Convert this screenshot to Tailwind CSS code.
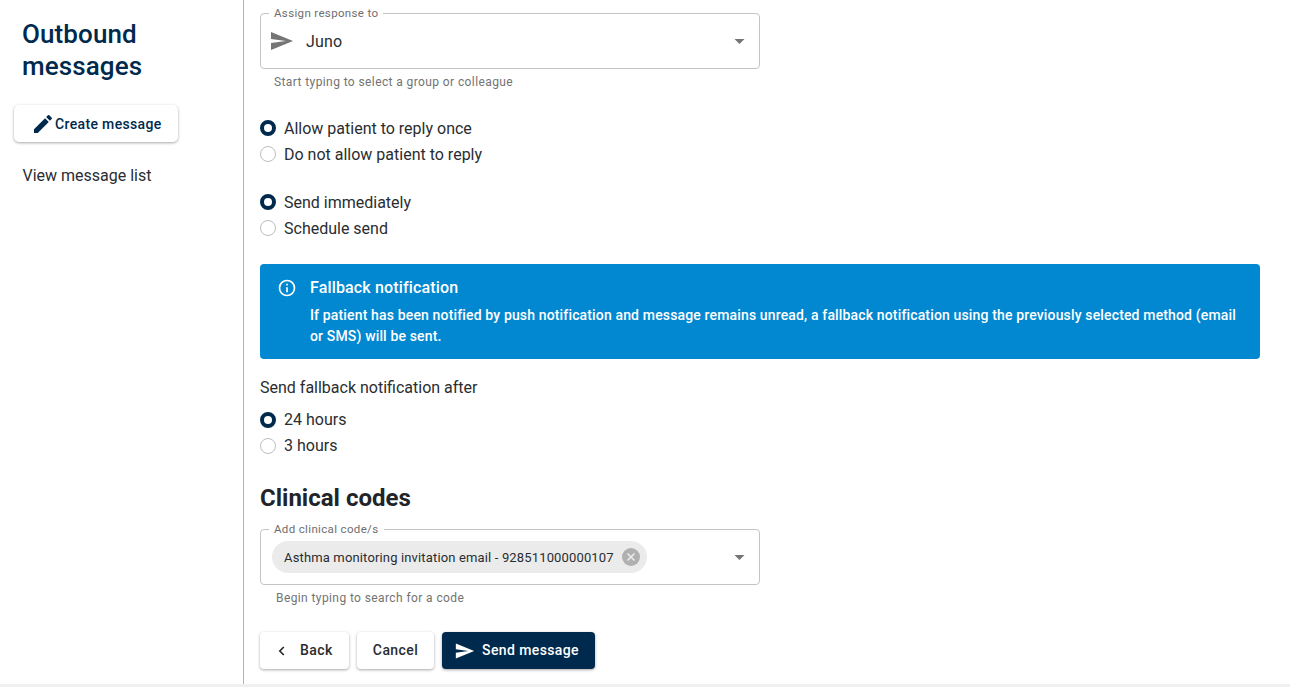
<!DOCTYPE html>
<html>
<head>
<meta charset="utf-8">
<script src="https://cdn.jsdelivr.net/npm/@tailwindcss/browser@4"></script>
</head>
<body class="bg-white font-['Roboto',sans-serif] text-[#2a2d30] overflow-hidden">
<div class="w-[1290px] h-[687px] flex flex-col">
  <div class="flex h-[684px]">
    <aside class="w-[244px] h-full border-r border-[#b4b4b4] shrink-0 flex flex-col">
      <h1 class="ml-[22px] mt-[18px] text-[26px] leading-[32px] font-medium text-[#002a4d] tracking-[0.1px]">Outbound<br>messages</h1>
      <button class="ml-[14px] mt-[23px] w-[164px] h-[37px] rounded-[5px] bg-white shadow-[0_1px_3px_rgba(0,0,0,0.35)] flex items-center pl-[17px] text-[#002a4d] text-[14px] font-medium tracking-[0.35px]">
        <svg class="w-[24px] h-[24px] shrink-0" viewBox="0 0 24 24" fill="#002a4d"><path d="M3 17.25V21h3.75L17.81 9.94l-3.75-3.75L3 17.25zM20.71 7.04a1 1 0 0 0 0-1.41l-2.34-2.34a1 1 0 0 0-1.41 0l-1.83 1.83 3.75 3.75 1.83-1.83z"/></svg>
        <span class="mt-[1px]">Create message</span>
      </button>
      <a class="ml-[22.5px] mt-[24px] text-[16px] leading-[20px] text-[#2a2d30]">View message list</a>
    </aside>
    <main class="flex-1 pl-[16px] pr-[30px] flex flex-col items-start">
      <div class="relative mt-[13px] w-[500px] h-[56px] border border-[#c4c4c4] rounded-[4px] flex items-center pl-[9px] pr-[14px]">
        <span class="absolute -top-[7px] left-[8px] bg-white px-[5px] text-[11.5px] leading-[12px] tracking-[0.35px] text-[#6e6e6e]">Assign response to</span>
        <svg class="w-[24px] h-[24px] shrink-0" viewBox="0 0 24 24" fill="#757575"><path d="M1.01 21 23 12 1.01 3 1 10l15 2-15 2z"/></svg>
        <span class="ml-[12px] mt-[1px] text-[16px] tracking-[0.15px] text-[#2a2d30]">Juno</span>
        <svg class="ml-auto mt-[1px] w-[11px] h-[5px]" viewBox="0 0 12 6" fill="#757575"><path d="M0 0h12L6 6z"/></svg>
      </div>
      <p class="ml-[14px] mt-[5px] text-[12px] leading-[16px] tracking-[0.4px] text-[#737373]">Start typing to select a group or colleague</p>

      <div class="mt-[25px] flex flex-col">
        <label class="h-[26px] flex items-center gap-[8px] text-[16px]"><span class="w-[16px] h-[16px] rounded-full border-[4px] border-[#002a4d] bg-white"></span><span class="mt-[1px]">Allow patient to reply once</span></label>
        <label class="h-[26px] flex items-center gap-[8px] text-[16px]"><span class="w-[16px] h-[16px] rounded-full border border-[#bdbdbd] bg-white"></span><span class="mt-[1px]">Do not allow patient to reply</span></label>
      </div>
      <div class="mt-[22px] flex flex-col">
        <label class="h-[26px] flex items-center gap-[8px] text-[16px]"><span class="w-[16px] h-[16px] rounded-full border-[4px] border-[#002a4d] bg-white"></span><span class="mt-[1px]">Send immediately</span></label>
        <label class="h-[26px] flex items-center gap-[8px] text-[16px]"><span class="w-[16px] h-[16px] rounded-full border border-[#bdbdbd] bg-white"></span><span class="mt-[1px]">Schedule send</span></label>
      </div>

      <div class="mt-[23px] w-[1000px] h-[95px] rounded-[4px] bg-[#0288d1] text-white flex pl-[17px] pr-[20px] pt-[14px]">
        <svg class="w-[20px] h-[20px] shrink-0" viewBox="0 0 24 24" fill="#fff"><path d="M11 7h2v2h-2zm0 4h2v6h-2zm1-9a10 10 0 1 0 0 20 10 10 0 0 0 0-20zm0 18a8 8 0 1 1 0-16 8 8 0 0 1 0 16z"/></svg>
        <div class="ml-[13px]">
          <div class="text-[16px] leading-[20px] font-medium tracking-[0.15px]">Fallback notification</div>
          <p class="mt-[7px] w-[940px] text-[14px] leading-[21px] font-medium tracking-[0.15px]">If patient has been notified by push notification and message remains unread, a fallback notification using the previously selected method (email or SMS) will be sent.</p>
        </div>
      </div>

      <p class="mt-[19px] text-[16px] leading-[20px]">Send fallback notification after</p>
      <div class="mt-[9px] flex flex-col">
        <label class="h-[26px] flex items-center gap-[8px] text-[16px]"><span class="w-[16px] h-[16px] rounded-full border-[4px] border-[#002a4d] bg-white"></span>24 hours</label>
        <label class="h-[26px] flex items-center gap-[8px] text-[16px]"><span class="w-[16px] h-[16px] rounded-full border border-[#bdbdbd] bg-white"></span>3 hours</label>
      </div>

      <h2 class="mt-[25px] text-[24px] leading-[28px] font-bold text-[#212529]">Clinical codes</h2>

      <div class="relative mt-[17px] w-[500px] h-[56px] border border-[#c4c4c4] rounded-[4px] flex items-center pl-[11px] pr-[14px]">
        <span class="absolute -top-[7px] left-[8px] bg-white px-[5px] text-[11.5px] leading-[12px] tracking-[0.35px] text-[#6e6e6e]">Add clinical code/s</span>
        <span class="h-[32px] rounded-full bg-[#ebebeb] flex items-center pl-[12px] pr-[7px] text-[13px] tracking-[0.15px] text-[#2a2d30]"><span class="mt-[1px]">Asthma monitoring invitation email - 928511000000107</span>
          <svg class="ml-[8px] w-[18px] h-[18px]" viewBox="0 0 18 18"><circle cx="9" cy="9" r="9" fill="#b0b0b0"/><path d="M5.5 5.5l7 7M12.5 5.5l-7 7" stroke="#ebebeb" stroke-width="1.6"/></svg>
        </span>
        <svg class="ml-auto mt-[1px] w-[11px] h-[5px]" viewBox="0 0 12 6" fill="#757575"><path d="M0 0h12L6 6z"/></svg>
      </div>
      <p class="ml-[16px] mt-[5px] text-[12px] leading-[16px] tracking-[0.4px] text-[#737373]">Begin typing to search for a code</p>

      <div class="mt-[26px] flex gap-[8px]">
        <button class="w-[89px] h-[37px] rounded-[4px] bg-white shadow-[0_1px_3px_rgba(0,0,0,0.35)] flex items-center pl-[15px] text-[14px] font-medium tracking-[0.4px] text-[#2a2d30]">
          <svg class="w-[14px] h-[14px] mr-[11px]" viewBox="0 0 14 14" fill="none" stroke="#212529" stroke-width="1.6"><path d="M8.8 3 4.8 7l4 4"/></svg>Back
        </button>
        <button class="w-[77px] h-[37px] rounded-[4px] bg-white shadow-[0_1px_3px_rgba(0,0,0,0.35)] text-[14px] font-medium tracking-[0.4px] text-[#2a2d30]">Cancel</button>
        <button class="w-[153px] h-[37px] rounded-[4px] bg-[#002a4d] shadow-[0_1px_3px_rgba(0,0,0,0.35)] flex items-center pl-[13px] text-[14px] font-medium tracking-[0.4px] text-white">
          <svg class="w-[20px] h-[20px] mr-[7px]" viewBox="0 0 24 24" fill="#fff"><path d="M1.01 21 23 12 1.01 3 1 10l15 2-15 2z"/></svg>Send message
        </button>
      </div>
    </main>
  </div>
  <div class="h-[3px] bg-[#f0f0f0]"></div>
</div>
</body>
</html>
